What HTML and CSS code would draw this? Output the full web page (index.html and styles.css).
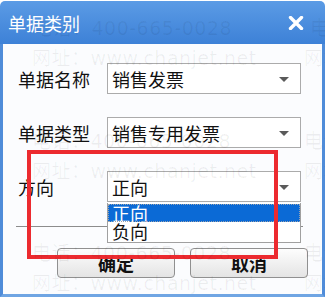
FILE: index.html
```html
<!DOCTYPE html>
<html lang="zh">
<head>
<meta charset="utf-8">
<title>单据类别</title>
<link rel="stylesheet" href="styles.css">
</head>
<body>
<div class="dialog">
  <div class="titlebar">
    <span class="title">单据类别</span>
    <svg class="close" width="16" height="14" viewBox="0 0 16 14"><path d="M2.5 1.5 L13.5 12.5 M13.5 1.5 L2.5 12.5" stroke="#fff" stroke-width="3.4" stroke-linecap="round"/></svg>
  </div>
  <div class="content">
    <div class="form">
      <label class="label">单据名称</label>
      <div class="select"><span>销售发票</span><i class="arrow"></i></div>
      <label class="label">单据类型</label>
      <div class="select"><span>销售专用发票</span><i class="arrow"></i></div>
      <label class="label">方向</label>
      <div class="select"><span>正向</span><i class="arrow"></i></div>
    </div>
    <div class="separator"></div>
    <div class="buttons">
      <button class="btn">确定</button>
      <button class="btn">取消</button>
    </div>
    <ul class="listbox">
      <li class="option selected">正向</li>
      <li class="option">负向</li>
    </ul>
    <div class="highlight-box"></div>
  </div>
  <div class="watermark">
    <span class="wm wm-a">电话：400-665-0028</span>
    <span class="wm wm-b">网址：www.chanjet.net</span>
    <span class="wm wm-c">电话：400-665-0028</span>
    <span class="wm wm-d">网址：www.chanjet.net</span>
    <span class="wm wm-e">电话：400-665-0028</span>
    <span class="wm wm-f">网址：www.chanjet.net</span>
    <span class="wm wm-a2">电话</span>
    <span class="wm wm-b2">网址</span>
    <span class="wm wm-c2">电话</span>
    <span class="wm wm-d2">网址</span>
    <span class="wm wm-e2">电话</span>
    <span class="wm wm-f2">网址</span>
  </div>
</div>
</body>
</html>
```
FILE: styles.css
```css
html, body {
  margin: 0;
  padding: 0;
  background: #ffffff;
}
body {
  font-family: "Noto Sans CJK SC", "Noto Sans", sans-serif;
  width: 325px;
  height: 302px;
  overflow: hidden;
}
.dialog {
  position: relative;
  width: 325px;
  margin-top: 1px;
}
.titlebar {
  height: 43px;
  box-sizing: border-box;
  background: linear-gradient(#5b9be5, #3d81d7);
  border-radius: 5px 5px 0 0;
  display: flex;
  align-items: center;
  justify-content: space-between;
  padding: 0 21px 0 8px;
}
.title {
  color: #ffffff;
  font-size: 18px;
  line-height: 22px;
}
.close {
  display: block;
  margin-top: 1px;
}
.content {
  position: relative;
  height: 253px;
  box-sizing: border-box;
  border: 3px solid #4f8cd9;
  border-top: 0;
  border-bottom-color: #6fa5e3;
  background: #fbfcfe;
  padding: 19px 0 0 15px;
}
.form {
  display: grid;
  grid-template-columns: 89px 194px;
  grid-auto-rows: 31px;
  row-gap: 23px;
  align-items: center;
}
.label {
  font-size: 18px;
  color: #111;
  line-height: 24px;
}
.select {
  height: 31px;
  box-sizing: border-box;
  border: 1px solid #ababab;
  background: #ffffff;
  display: flex;
  align-items: center;
  justify-content: space-between;
  padding: 0 11px 0 4px;
  font-size: 18px;
  color: #111;
}
.arrow {
  width: 0;
  height: 0;
  border-left: 5.5px solid transparent;
  border-right: 5.5px solid transparent;
  border-top: 5px solid #5a5a5a;
  margin-top: 2px;
}
.separator {
  margin: 24px 0 0 -2px;
  width: 287px;
  height: 1px;
  background: #8c8c8c;
}
.buttons {
  display: flex;
  gap: 15px;
  margin-top: 21px;
  padding-left: 39px;
}
.btn {
  width: 118px;
  height: 30px;
  box-sizing: border-box;
  border: 1px solid #909090;
  border-radius: 4px;
  background: linear-gradient(#fdfdfd, #e4e4e4);
  font-family: "Noto Sans CJK SC", sans-serif;
  font-size: 18px;
  font-weight: 700;
  color: #111;
  padding: 0;
  line-height: 26px;
}
.listbox {
  position: absolute;
  left: 104px;
  top: 159px;
  width: 194px;
  height: 40px;
  box-sizing: border-box;
  margin: 0;
  padding: 1px 0 0;
  list-style: none;
  background: #ffffff;
  border: 1px solid #a0a0a0;
  border-top: 0;
}
.option {
  height: 18px;
  line-height: 18px;
  font-size: 18px;
  color: #111;
  padding-left: 4px;
  box-sizing: border-box;
}
.option.selected {
  background: #0b6ad6;
  color: #ffffff;
  outline: 1px dotted #9aa4b0;
  outline-offset: -1px;
}
.highlight-box {
  position: absolute;
  left: 24px;
  top: 106px;
  width: 251px;
  height: 109px;
  box-sizing: border-box;
  border: 4px solid #ec2a2f;
}
.watermark {
  position: absolute;
  inset: 0;
  pointer-events: none;
  overflow: hidden;
  height: 296px;
}
.wm {
  position: absolute;
  font-family: "DejaVu Sans", "Noto Sans CJK SC", sans-serif;
  font-size: 19px;
  letter-spacing: 0.5px;
  line-height: 20px;
  color: rgba(0, 0, 0, 0.06);
  white-space: nowrap;
}
.wm-a { left: 33px; top: 17px; }
.wm-b { left: 32px; top: 47px; }
.wm-c { left: 32px; top: 130px; }
.wm-d { left: 32px; top: 160px; }
.wm-e { left: 32px; top: 242px; }
.wm-f { left: 32px; top: 272px; }
.wm-a2 { left: 310px; top: 17px; }
.wm-b2 { left: 304px; top: 47px; }
.wm-c2 { left: 304px; top: 130px; }
.wm-d2 { left: 304px; top: 160px; }
.wm-e2 { left: 304px; top: 242px; }
.wm-f2 { left: 304px; top: 272px; }
```
